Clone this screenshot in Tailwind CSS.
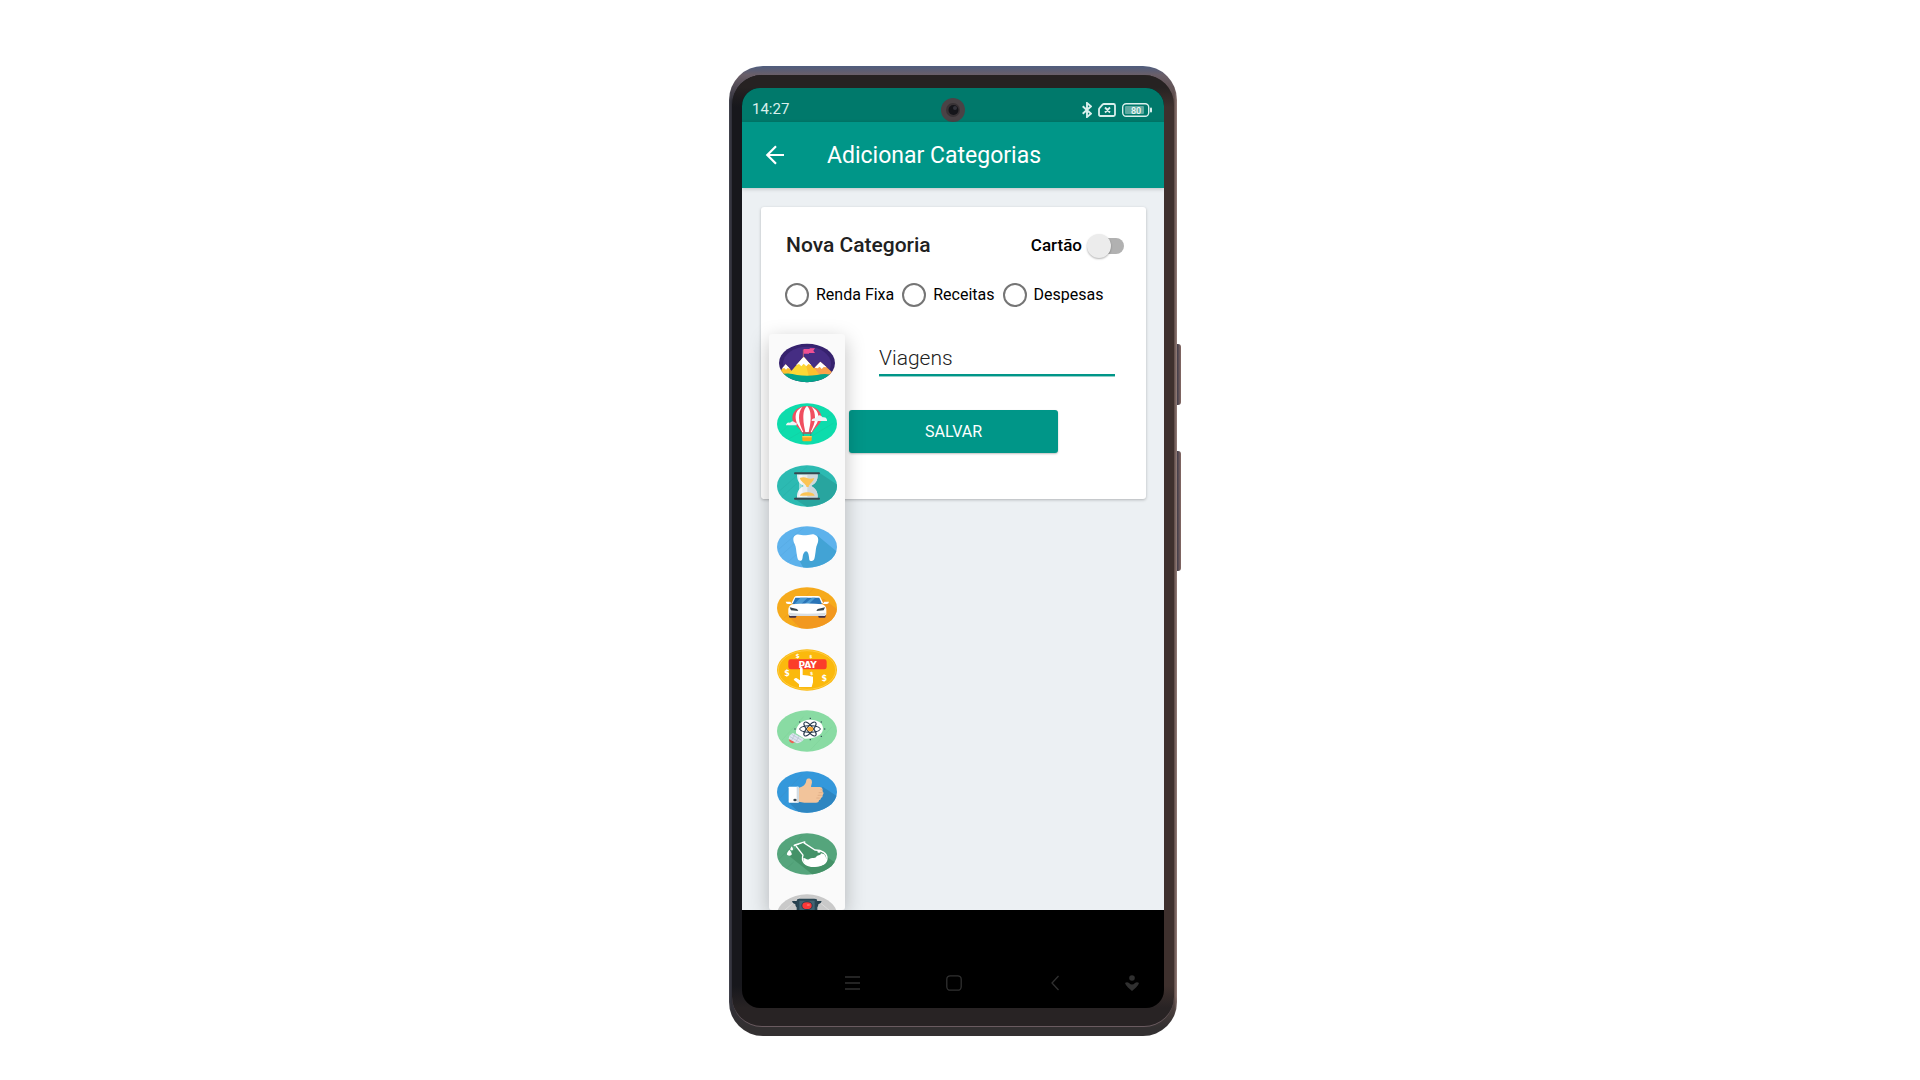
<!DOCTYPE html>
<html lang="pt-BR">
<head>
<meta charset="utf-8">
<meta name="viewport" content="width=device-width, initial-scale=1">
<title>Adicionar Categorias</title>
<script src="https://cdn.jsdelivr.net/npm/@tailwindcss/browser@4"></script>
</head>
<body class="min-h-screen bg-white font-['Roboto',sans-serif] text-[#212121]">
<main class="flex justify-center pt-[66px] pr-[14px]">
  <!-- phone shell -->
  <div class="relative w-full max-w-[448px] rounded-[34px] bg-[linear-gradient(to_bottom,#4f5d7e_0px,#6a5f68_9px,transparent_36px,transparent_calc(100%-40px),#333031_calc(100%-8px)),linear-gradient(to_right,#474852_0%,#30303a_2px,#3e302d_50%,#5a4844_calc(100%-3px),#97807b_100%)] px-[3px] pt-[9px] pb-[9px]">
    <span class="absolute top-[278px] left-full h-[61px] w-1 rounded-r-[3px] bg-linear-to-r from-[#3f3b48] to-[#876a64]"></span>
    <span class="absolute top-[385px] left-full h-[120px] w-1 rounded-r-[3px] bg-linear-to-r from-[#3f3b48] to-[#876a64]"></span>
    <div class="rounded-[30px] border-b border-[#6a5b60] bg-[linear-gradient(to_bottom,#262222_0px,#262222_12px,transparent_32px,transparent_calc(100%-40px),#282324_calc(100%-18px)),linear-gradient(to_right,#17171c_0%,#17171c_10px,#3e302d_calc(100%-10px),#3e302d_100%)] px-[10px] pt-[13px] pb-[18px]">
      <div class="overflow-hidden rounded-[18px] bg-black">

        <!-- status bar -->
        <div class="grid h-[34px] grid-cols-3 items-center bg-[#00796b] px-[10px] pt-[9px] text-[#d9efec]">
          <time class="text-[15px]">14:27</time>
          <svg class="size-6 justify-self-center" viewBox="0 0 24 24" aria-hidden="true"><circle cx="12" cy="12" r="12" fill="#4a4346"/><circle cx="12" cy="12" r="7" fill="#383235"/><circle cx="12.500" cy="12" r="5" fill="#15151a"/><circle cx="14" cy="10" r="2" fill="#33333b"/></svg>
          <div class="flex items-center justify-end gap-[6px] pr-[2px]">
            <svg class="h-4 w-[10px]" viewBox="0 0 10 16" fill="none" stroke="currentColor" stroke-width="1.900" aria-hidden="true"><path d="M.7 4.300 9 11.700 5 15V1l4 3.300L.7 11.700"/></svg>
            <svg class="h-[14px] w-[18px]" viewBox="0 0 18 14" fill="none" stroke="currentColor" stroke-width="1.800" aria-hidden="true"><path d="M6 1h9.500Q17 1 17 2.500v9q0 1.500-1.500 1.500H2.500Q1 13 1 11.500V6.500Q1 5.500 1.700 4.800L4.500 1.700Q5 1 6 1ZM7 4.500l5 5M12 4.500l-5 5"/></svg>
            <svg class="h-[14px] w-[30px]" viewBox="0 0 30 14" aria-hidden="true"><rect x=".7" y=".7" width="26" height="12.600" rx="3.500" fill="none" stroke="currentColor" stroke-width="1.400"/><rect x="3" y="3" width="19" height="8" rx="1" fill="#5eaaa1"/><rect x="28" y="4.500" width="2" height="5" rx="1" fill="currentColor"/><text x="14" y="10.500" text-anchor="middle" font-size="9" font-weight="500" fill="#f1faf9">80</text></svg>
          </div>
        </div>

        <!-- app bar -->
        <header class="relative z-10 flex h-[66px] items-center gap-[35px] bg-[#009688] px-5 text-white shadow-[0_1px_4px_rgba(0,0,0,0.2)]">
          <button type="button" aria-label="Voltar" class="size-[26px] shrink-0"><svg class="size-[26px]" viewBox="0 0 26 26" fill="none" stroke="currentColor" stroke-width="2.200"><path d="M22 13H5.500M14 4.300 5.300 13l8.700 8.700"/></svg></button>
          <h1 class="pt-[2px] pl-1 text-[23px]">Adicionar Categorias</h1>
        </header>

        <div class="relative min-h-[722px] overflow-hidden bg-[#ecf0f3] pt-[19px] pr-[18px] pl-[19px]">
          <form class="rounded-[3px] bg-white pt-[27px] pr-[22px] pb-[46px] pl-6 shadow-[0_1px_3px_rgba(0,0,0,0.25)]">
            <div class="flex h-6 items-center justify-between">
              <h2 class="pl-px text-[21px] font-medium">Nova Categoria</h2>
              <label class="flex items-center gap-[5px] text-[17px] font-medium text-black">Cartão
                <span class="relative flex h-6 w-[37px] items-center">
                  <input type="checkbox" role="switch" class="peer ml-2 h-4 w-[29px] appearance-none rounded-full bg-[#b1b1b1]">
                  <span class="absolute left-0 size-6 rounded-full bg-[#ececec] shadow-[0_1px_2px_rgba(0,0,0,0.3)] peer-checked:left-[14px]"></span>
                </span>
              </label>
            </div>
            <fieldset class="mt-[25px] flex h-6 items-center gap-2 text-base whitespace-nowrap text-black">
              <label class="flex items-center gap-[7px]"><input type="radio" name="tipo" class="size-6 shrink-0 appearance-none rounded-full border-2 border-[#757575] checked:bg-[#009688]">Renda Fixa</label>
              <label class="flex items-center gap-[7px]"><input type="radio" name="tipo" class="size-6 shrink-0 appearance-none rounded-full border-2 border-[#757575] checked:bg-[#009688]">Receitas</label>
              <label class="flex items-center gap-[7px]"><input type="radio" name="tipo" class="size-6 shrink-0 appearance-none rounded-full border-2 border-[#757575] checked:bg-[#009688]">Despesas</label>
            </fieldset>
            <div class="mt-[33px] pr-[9px] pl-[94px]">
              <input type="text" aria-label="Nome da categoria" value="Viagens" class="h-9 w-full border-b-2 border-[#009688] bg-transparent pt-[2px] text-[21px] font-light shadow-[0_1px_0_#8fd0ca] outline-none">
            </div>
            <div class="mt-[34px] pr-[66px] pl-16">
              <button type="button" class="h-[43px] w-full rounded-[3px] bg-[#009688] pt-px text-base text-white shadow-[0_1px_2px_rgba(0,0,0,0.25)]">SALVAR</button>
            </div>
          </form>

          <!-- category icon picker, open over the card -->
          <div class="absolute top-[146px] bottom-0 left-[27px] w-[76px] rounded-[3px] bg-[#fafafa] pt-2 shadow-[0_6px_20px_rgba(0,0,0,0.25)]">
            <ul class="flex h-[594px] flex-col items-center justify-between">
              <li><button type="button" aria-label="Montanha" class="block"><svg class="h-[42px] w-[60px]" viewBox="0 0 180 126">
                <clipPath id="c1"><ellipse cx="90" cy="63" rx="84" ry="58"/></clipPath>
                <g clip-path="url(#c1)"><rect width="180" height="126" fill="#36226e"/><ellipse cx="90" cy="66" rx="72" ry="52" fill="#452d83"/>
                <path d="M0 100 26 67l30 33z" fill="#fbc02d"/><path d="M14 80 26 67l14 14-8-3-5 5-5-5z" fill="#fff"/>
                <path d="M90 100 130 59l46 41z" fill="#f9a24a"/><path d="M113 77l17-18 19 17-9-1-6 6-6-7-6 5z" fill="#fff"/>
                <path d="M28 104 80 44l52 60z" fill="#fdd835"/><path d="M80 44l52 60H96z" fill="#fbc02d"/><path d="M57 70l23-26 23 26-9-4-6 7-8-8-7 8-7-7z" fill="#fff"/>
                <path d="M0 101q30-12 60-2 30 4 60 0 30-8 60 4v23H0z" fill="#02a58a"/></g>
                <path d="M79 23v23" stroke="#ee7b62" stroke-width="2"/><path d="M80 21h18v-2h16l-5 7 5 7H96v2H80z" fill="#ef4f93"/></svg></button></li>
              <li><button type="button" aria-label="Balão" class="block"><svg class="h-[42px] w-[60px]" viewBox="0 0 180 126">
                <ellipse cx="90" cy="63" rx="90" ry="62" fill="#0ddcac"/><path d="M10 90 90 15M35 108l130-75M70 120l100-60" stroke="#12cfa3" stroke-width="2"/>
                <path d="M90 9c-27 0-44 17-44 36 0 17 18 25 28 43h32c10-18 28-26 28-43 0-19-17-36-44-36z" fill="#f04f60"/>
                <path d="M90 9c-9 8-11 20-11 36 0 17 4 30 6 43h10c2-13 6-26 6-43 0-16-2-28-11-36zM76 12C60 20 55 30 56 46c1 16 13 27 20 42h3C72 71 66 60 66 45c0-14 3-25 10-33zM104 12c16 8 21 18 20 34-1 16-13 27-20 42h-3c7-17 13-28 13-43 0-14-3-25-10-33z" fill="#fff"/>
                <path d="M27 65q3-9 12-6 8-9 16 0h4v8H27zM104 54q0-9 12-8 9-17 21-3 11-2 13 7v4z" fill="#eef3f5"/>
                <path d="M76 88h28v4H76z" fill="#c83f50"/><path d="M79 92v8M101 92v8" stroke="#477" stroke-width="2"/><path d="M76 100h28v11q0 4-4 4H80q-4 0-4-4z" fill="#f6a821"/><path d="M76 99h28v4H76z" fill="#ffd05a"/></svg></button></li>
              <li><button type="button" aria-label="Ampulheta" class="block"><svg class="h-[42px] w-[60px]" viewBox="0 0 180 126">
                <clipPath id="c3"><ellipse cx="90" cy="63" rx="90" ry="62"/></clipPath>
                <g clip-path="url(#c3)"><rect width="180" height="126" fill="#2cbab2"/><path d="M128 24l60 40v62H90L52 101l38-38z" fill="#28a59f"/><path d="M5 80 90 5M10 100 60 55" stroke="#29b0a9" stroke-width="2"/></g>
                <path d="M60 28h62c0 18-4 26-20 35 16 9 20 17 20 35H60c0-18 4-26 20-35-16-9-20-17-20-35z" fill="#e8edf0"/><path d="M91 28h31c0 18-4 26-20 35 16 9 20 17 20 35H91z" fill="#cfd8dc"/><path d="M66 30h10v66H66z" fill="#fff" opacity=".5"/>
                <path d="M68 39q12-5 22 0t22 0c-3 10-10 14-17 24v3h-7v-3c-7-10-17-14-20-24zM69 92c2-14 42-14 44 0z" fill="#fbc454"/>
                <path d="M54 25h72M54 101h72" stroke="#37474f" stroke-width="6" stroke-linecap="round"/></svg></button></li>
              <li><button type="button" aria-label="Dentista" class="block"><svg class="h-[42px] w-[60px]" viewBox="0 0 180 126">
                <clipPath id="c4"><ellipse cx="90" cy="63" rx="90" ry="62"/></clipPath>
                <g clip-path="url(#c4)"><rect width="180" height="126" fill="#5db2ec"/><path d="M122 29l70 58v60H90L66 101z" fill="#42a3d5"/><path d="M5 70 80 5M8 92 55 50M30 110 65 80" stroke="#56a9e2" stroke-width="2"/></g>
                <path d="M58 26c9-3 17 3 29 2s17-5 26-2c12 4 13 17 8 28-5 10-4 20-7 35-2 14-5 15-12 16-6 0-5-4-6-12-1-7-3-17-9-17s-9 10-10 17c-1 8-2 12-8 11-6-1-7-5-9-15-3-15-2-25-7-35-6-11-6-24 5-28z" fill="#fff"/></svg></button></li>
              <li><button type="button" aria-label="Carro" class="block"><svg class="h-[42px] w-[60px]" viewBox="0 0 180 126">
                <clipPath id="c5"><ellipse cx="90" cy="63" rx="90" ry="62"/></clipPath>
                <g clip-path="url(#c5)"><rect width="180" height="126" fill="#f6aa1c"/><path d="M140 35l50 40v60H80L36 89z" fill="#f2981f"/><path d="M20 95 110 5M50 115l90-75M90 120l70-60" stroke="#ec9e1f" stroke-width="2"/></g>
                <path d="M36 80h22v9q0 3-4 3H39q-3 0-3-4zM124 80h22v8q0 4-3 4h-15q-4 0-4-3z" fill="#40304b"/>
                <path d="M52 31q2-4 8-4h62q6 0 8 4l9 18H43z" fill="#fff"/><path d="M55 32h72l8 20H46z" fill="#2a75b8"/><path d="M70 32h22L72 52H52zM105 32h10L95 52H82z" fill="#4c9bd2"/>
                <path d="M34 66q2-11 12-14 45-5 90 0 10 3 12 14v14q-1 7-10 7H44q-9 0-10-7z" fill="#fff"/><path d="M26 44h14l5 7h-12q-6 0-7-7zM156 44h-14l-5 7h12q6 0 7-7z" fill="#fff"/>
                <path d="M38 61l22 5 4 6-22-2zM144 61l-22 5-4 6 22-2z" fill="#39464e"/><path d="M36 77q54 6 110 0v5q-2 5-9 5H45q-7 0-9-5z" fill="#d9dee3"/></svg></button></li>
              <li><button type="button" aria-label="Pagamento" class="block"><svg class="h-[42px] w-[60px]" viewBox="0 0 180 126">
                <ellipse cx="90" cy="63" rx="90" ry="62" fill="#fbb90d"/><ellipse cx="90" cy="63" rx="86" ry="58" fill="none" stroke="#ffd35e" stroke-width="2"/>
                <g fill="#fff" class="font-['DejaVu_Sans',sans-serif] font-bold" text-anchor="middle"><text x="62" y="28" font-size="18">$</text><text x="101" y="27" font-size="13">$</text><text x="30" y="80" font-size="24">$</text><text x="104" y="78" font-size="14">$</text><text x="142" y="95" font-size="24">$</text>
                <rect x="34" y="31" width="115" height="30" rx="7" fill="#fb3d2a"/><text x="92" y="56" font-size="27">PAY</text></g>
                <path d="M69 59q0-5 4-5t4 5v19q15 0 31 5v17l-4 14H66v-8L50 92q3-6 8-5l11 7z" fill="#fff"/></svg></button></li>
              <li><button type="button" aria-label="Ciência" class="block"><svg class="h-[42px] w-[60px]" viewBox="0 0 180 126">
                <ellipse cx="90" cy="63" rx="90" ry="62" fill="#89dba3"/><path d="M15 90 80 20M100 120l65-70" stroke="#80d39b" stroke-width="2"/>
                <path d="M38 86l16 10q-8 7-15 0-5-5-1-10z" fill="#ee6153"/><path d="M48 69l33 18q-8 12-22 13L35 86q2-12 13-17z" fill="#dde5f0"/><path d="M44 73l30 18M39 80l29 17M55 71 43 92M67 77 56 97" stroke="#b3becb" stroke-width="2"/>
                <path d="M57 70c-2-20 14-41 42-41 27 0 41 13 39 29-2 18-26 29-55 28z" fill="#fff"/>
                <g fill="none" stroke="#26384b" stroke-width="3"><ellipse cx="99" cy="57" rx="31" ry="10"/><ellipse cx="99" cy="57" rx="26" ry="9" transform="rotate(50 99 57)"/><ellipse cx="99" cy="57" rx="26" ry="9" transform="rotate(-50 99 57)"/></g><ellipse cx="100" cy="57" rx="9" ry="7" fill="#fba935"/>
                <path d="M98 25h4M98 89h4M66 36h4M131 36h4M52 57h4M141 57h4M131 79h4" stroke="#26384b" stroke-width="3"/></svg></button></li>
              <li><button type="button" aria-label="Favorito" class="block"><svg class="h-[42px] w-[60px]" viewBox="0 0 180 126">
                <clipPath id="c8"><ellipse cx="90" cy="63" rx="90" ry="62"/></clipPath>
                <g clip-path="url(#c8)"><rect width="180" height="126" fill="#3498db"/><path d="M138 48l60 40v60H90L36 95z" fill="#2e86c1"/><path d="M10 80 75 10M20 100l20-20" stroke="#3d90cc" stroke-width="2"/></g>
                <path d="M65 50c14-1 22-11 23-22 1-8 13-7 16 0 3 8-2 14-2 20h27q8 1 8 8-2 5 2 8 2 5-2 8 1 7-5 9 0 6-6 7 0 7-9 7H82q-8-1-17-3z" fill="#f2c49b"/><path d="M130 56h6M125 65h12M122 73h12M118 81h10" stroke="#d9a67e" stroke-width="2"/>
                <rect x="35" y="47" width="30" height="48" rx="2" fill="#fff"/><path d="M59 47h6v48h-6z" fill="#d2dbe2"/><ellipse cx="54" cy="87" rx="5" ry="4" fill="#37474f"/></svg></button></li>
              <li><button type="button" aria-label="Laboratório" class="block"><svg class="h-[42px] w-[60px]" viewBox="0 0 180 126">
                <clipPath id="c9"><ellipse cx="90" cy="63" rx="90" ry="62"/></clipPath>
                <g clip-path="url(#c9)"><rect width="180" height="126" fill="#55a57c"/><path d="M83 28l110 73v40h-66L32 65l28-21z" fill="#449268"/><path d="M5 80 75 8M30 105l20-18" stroke="#4c9b72" stroke-width="2"/></g>
                <path d="M52 37 83 27" stroke="#fff" stroke-width="5" stroke-linecap="round"/><path d="M57 39l21 27c-7 20 7 34 35 34 23 0 37-10 37-25 0-13-14-24-36-24L80 29" fill="#449268" stroke="#fff" stroke-width="4"/>
                <path d="M79 75c8-1 9 8 18 3 7-6 15-1 20-5 5-9 13-3 15-12l10 3c14 20 4 37-29 37-24 0-35-9-34-26z" fill="#fff"/><ellipse cx="126" cy="56" rx="5" ry="3" fill="#fff"/>
                <path d="M37 50q-9 11-7 15 7 6 14 0 2-5-7-15zM44 40q-5 7-4 10 4 3 8 0 1-3-4-10z" fill="#fff"/></svg></button></li>
              <li><button type="button" aria-label="Semáforo" class="block"><svg class="h-[42px] w-[60px]" viewBox="0 0 180 126">
                <ellipse cx="90" cy="63" rx="90" ry="62" fill="#c9c9c9"/><path d="M10 60 70 8M110 10 170 60" stroke="#dadada" stroke-width="3"/>
                <path d="M45 21h17v20q-7-1-7-10-9-2-10-10zM134 21h-17v20q7-1 7-10 9-2 10-10z" fill="#263f4d"/><rect x="59" y="14" width="62" height="100" rx="7" fill="#294553"/><rect x="67" y="20" width="46" height="90" fill="#416373"/><ellipse cx="90" cy="35" rx="17" ry="13" fill="#263f4d"/><ellipse cx="90" cy="35" rx="14" ry="10" fill="#fb3838"/><ellipse cx="94" cy="33" rx="5" ry="3" fill="#ff6961"/></svg></button></li>
            </ul>
          </div>
        </div>

        <!-- system navigation -->
        <nav class="grid h-[98px] grid-cols-[101fr_101fr_101fr_53fr] items-end justify-items-center pr-[6px] pb-[17px] pl-[60px] text-[#303030]">
          <button type="button" aria-label="Recentes"><svg class="h-4 w-[15px]" viewBox="0 0 15 16" fill="none" stroke="currentColor" stroke-width="1.600"><path d="M0 2h15M0 8h15M0 14h15"/></svg></button>
          <button type="button" aria-label="Início"><svg class="size-4" viewBox="0 0 16 16" fill="none" stroke="currentColor" stroke-width="1.300"><rect x=".8" y=".8" width="14.400" height="14.400" rx="3.500"/></svg></button>
          <button type="button" aria-label="Voltar"><svg class="h-4 w-2" viewBox="0 0 8 16" fill="none" stroke="currentColor" stroke-width="1.300"><path d="M7.500 1 1 8l6.500 7"/></svg></button>
          <button type="button" aria-label="Ocultar teclado"><svg class="h-4 w-[14px]" viewBox="0 0 14 16" fill="currentColor"><circle cx="7" cy="3" r="2.800"/><path d="M0 8q2-1.500 4 0 3 3 6 0 2-1.500 4 0-.5 2-3 4.500L7 16l-4-3.500Q.5 10 0 8z"/></svg></button>
        </nav>
      </div>
    </div>
  </div>
</main>
</body>
</html>
